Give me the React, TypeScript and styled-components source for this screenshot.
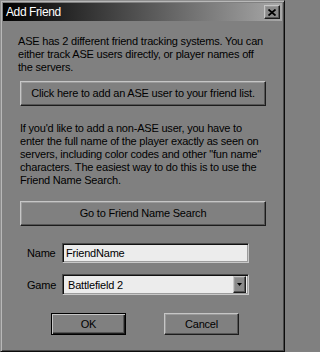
import React from "react";
import styled, { createGlobalStyle, css } from "styled-components";

const GlobalStyle = createGlobalStyle`
  html, body { margin: 0; padding: 0; background: #808080; }
  * { box-sizing: border-box; }
`;

const bevelRaised = css`
  border-style: solid;
  border-width: 1px;
  border-color: #c6c6c6 #1c1c1c #1c1c1c #c6c6c6;
  box-shadow: inset -1px -1px 0 #555555, inset 1px 1px 0 #9a9a9a;
`;

const Window = styled.div`
  width: 285px;
  height: 352px;
  background: #808080;
  border-style: solid;
  border-width: 1px;
  border-color: #8e8e8e #0c0c0c #0c0c0c #8e8e8e;
  box-shadow: inset 1px 1px 0 #b8b8b8, inset -1px -1px 0 #4a4a4a;
  padding: 2px;
  display: flex;
  flex-direction: column;
  font-family: "Liberation Sans", Arial, sans-serif;
  font-size: 11px;
  letter-spacing: -0.2px;
  color: #000;
`;

const TitleBar = styled.div`
  height: 18px;
  flex: none;
  background: linear-gradient(to right, #000000 0%, #2a2a2a 25%, #a8a8a8 100%);
  display: flex;
  align-items: center;
  justify-content: space-between;
  padding: 0 2px 0 3px;
`;

const Title = styled.span`
  color: #ffffff;
  font-size: 12px;
  letter-spacing: -0.4px;
  line-height: 18px;
`;

const CloseButton = styled.div`
  width: 16px;
  height: 14px;
  background: #8a8a8a;
  ${bevelRaised};
  display: flex;
  align-items: center;
  justify-content: center;
`;

const Body = styled.div`
  padding: 14px 16px 0 17px;
  display: flex;
  flex-direction: column;
`;

const Para = styled.p<{ $top: number; $shift?: number }>`
  margin: ${(p) => p.$top}px 0 0 ${(p) => p.$shift ?? 0}px;
  line-height: 13px;
  white-space: nowrap;
`;

const WideButton = styled.div<{ $top: number }>`
  margin-top: ${(p) => p.$top}px;
  height: 25px;
  width: 246px;
  background: #808080;
  ${bevelRaised};
  display: flex;
  align-items: center;
  justify-content: center;
  line-height: 13px;
`;

const FormRow = styled.div<{ $top: number; $h: number }>`
  margin-top: ${(p) => p.$top}px;
  height: ${(p) => p.$h}px;
  display: flex;
  align-items: center;
`;

const Label = styled.span`
  width: 42px;
  padding-left: 7px;
  flex: none;
`;

const sunken = css`
  border-style: solid;
  border-width: 1px;
  border-color: #4a4a4a #c8c8c8 #c8c8c8 #4a4a4a;
  box-shadow: inset 1px 1px 0 #111111, inset -1px -1px 0 #9c9c9c;
`;

const TextField = styled.div`
  width: 187px;
  height: 100%;
  background: #ececec;
  ${sunken};
  display: flex;
  align-items: center;
  padding-left: 3px;
`;

const SelectField = styled.div`
  width: 187px;
  height: 100%;
  background: #ececec;
  ${sunken};
  display: flex;
  align-items: center;
  justify-content: space-between;
  padding: 2px 2px 2px 5px;
`;

const DropButton = styled.div`
  width: 13px;
  height: 17px;
  background: #8a8a8a;
  ${bevelRaised};
  display: flex;
  align-items: center;
  justify-content: center;
`;

const ButtonRow = styled.div`
  margin-top: 18px;
  margin-left: 31px;
  display: flex;
  gap: 38px;
`;

const DialogButton = styled.div<{ $default?: boolean }>`
  width: 75px;
  height: 22px;
  background: #808080;
  display: flex;
  align-items: center;
  justify-content: center;
  line-height: 13px;
  ${(p) =>
    p.$default
      ? css`
          border: 1px solid #000;
          box-shadow: inset 1px 1px 0 #c6c6c6, inset -1px -1px 0 #1c1c1c,
            inset -2px -2px 0 #555555;
        `
      : bevelRaised}
`;

export default function App() {
  return (
    <>
      <GlobalStyle />
      <Window>
        <TitleBar>
          <Title>Add Friend</Title>
          <CloseButton>
            <svg width="8" height="7" viewBox="0 0 8 7">
              <path d="M0.5 0.5 L7.5 6.5 M7.5 0.5 L0.5 6.5" stroke="#000" strokeWidth="1.8" />
            </svg>
          </CloseButton>
        </TitleBar>
        <Body>
          <Para $top={0} $shift={-2}>
            ASE has 2 different friend tracking systems. You can
            <br />
            either track ASE users directly, or player names off
            <br />
            the servers.
          </Para>
          <WideButton $top={7}>Click here to add an ASE user to your friend list.</WideButton>
          <Para $top={16}>
            If you'd like to add a non-ASE user, you have to
            <br />
            enter the full name of the player exactly as seen on
            <br />
            servers, including color codes and other "fun name"
            <br />
            characters. The easiest way to do this is to use the
            <br />
            Friend Name Search.
          </Para>
          <WideButton $top={14}>Go to Friend Name Search</WideButton>
          <FormRow $top={17} $h={20}>
            <Label>Name</Label>
            <TextField>FriendName</TextField>
          </FormRow>
          <FormRow $top={11} $h={21}>
            <Label>Game</Label>
            <SelectField>
              <span>Battlefield 2</span>
              <DropButton>
                <svg width="5" height="3" viewBox="0 0 5 3">
                  <path d="M0 0 H5 L2.5 3 Z" fill="#000" />
                </svg>
              </DropButton>
            </SelectField>
          </FormRow>
          <ButtonRow>
            <DialogButton $default>OK</DialogButton>
            <DialogButton>Cancel</DialogButton>
          </ButtonRow>
        </Body>
      </Window>
    </>
  );
}
